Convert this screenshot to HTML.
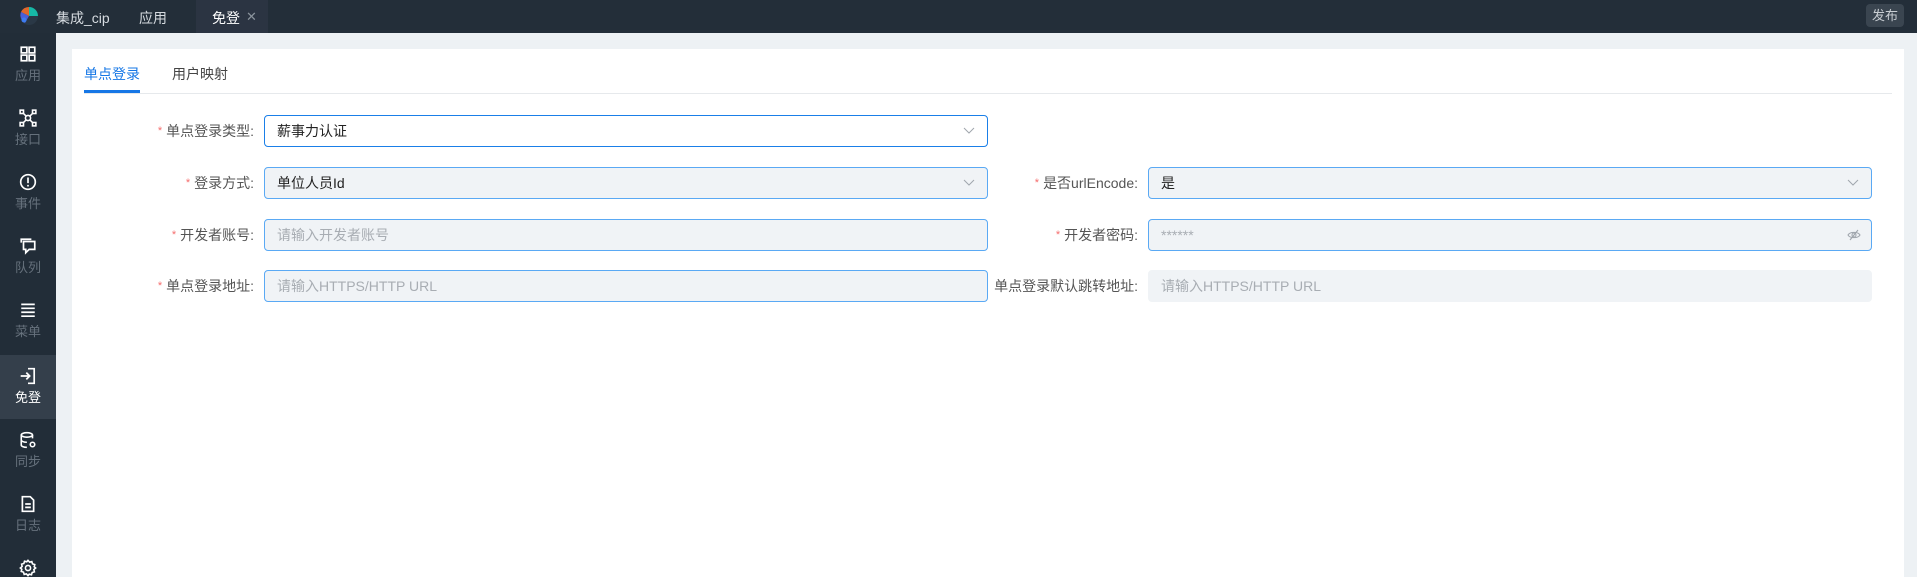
<!DOCTYPE html>
<html><head><meta charset="utf-8"><style>
*{box-sizing:border-box;margin:0;padding:0}
html{width:1917px;height:577px;overflow:hidden}
body{width:1917px;height:577px;overflow:hidden;background:#edf1f4;font-family:"Liberation Sans","Noto Sans CJK SC",sans-serif;font-size:14px;position:relative}
.top{position:absolute;left:0;top:0;width:1917px;height:33px;background:#232e39;color:#d6dbe0}
.top span{position:absolute;top:8px;font-size:14px}
.side{position:absolute;left:0;top:33px;width:56px;height:544px;background:#222d38;overflow:hidden}
.it{position:absolute;left:0;width:56px;height:64px;text-align:center;color:#66717c;font-size:13px}
.it svg{display:block;margin:12px auto 2px}
.it.act{background:#343f4b;color:#fff}
.card{position:absolute;left:72px;top:49px;width:1832px;height:528px;background:#fff}
.lab{position:absolute;text-align:right;color:#555;font-size:14px;line-height:32px;padding-right:4px}
.lab i{color:#f56c6c;font-style:normal;font-size:11px;margin-right:4px;vertical-align:2px}
.inp{position:absolute;height:32px;border:1px solid #5aa9f4;border-radius:4px;background:#f0f3f6;padding-left:12px;line-height:30px;color:#222;font-size:14px}
.ph{color:#a8adb3}
.arr{position:absolute;right:12px;top:11px}
</style></head><body>
<div class="top">
<svg style="position:absolute;left:19px;top:6px" width="20" height="20" viewBox="0 0 20 20"><circle cx="10" cy="10" r="9" fill="#2a3846"/><path d="M10 1a9 9 0 0 0-8 5l8 4z" fill="#e0672c"/><path d="M10 1a9 9 0 0 1 9 9l-9 0z" fill="#16b8a6"/><path d="M2 6a9 9 0 0 0 4 11l4-7z" fill="#4a5fd8"/><circle cx="5" cy="14" r="2.5" fill="#3d7cf0"/></svg>
<span style="left:56px">集成_cip</span>
<span style="left:139px">应用</span>
<div style="position:absolute;left:196px;top:0;width:72px;height:33px;background:#2b3442"></div>
<span style="left:212px;color:#fff">免登</span>
<span style="left:246px;color:#8a939c;font-size:13px;top:9px">✕</span>
<div style="position:absolute;left:1866px;top:4px;width:38px;height:23px;background:#3a4550;border-radius:4px;color:#c9ced3;font-size:13px;text-align:center;line-height:23px">发布</div>
</div>
<div class="side">
<div class="it" style="top:0"><svg width="18" height="18" viewBox="0 0 16 16" fill="none" stroke="#fff" stroke-width="1.5"><rect x="2" y="2" width="5" height="5"/><rect x="9" y="2" width="5" height="5"/><rect x="2" y="9" width="5" height="5"/><rect x="9" y="9" width="5" height="5"/></svg>应用</div>
<div class="it" style="top:64px"><svg width="18" height="18" viewBox="0 0 16 16" fill="none" stroke="#fff" stroke-width="1.4"><circle cx="8" cy="8" r="2.3"/><rect x="1" y="1" width="3" height="3"/><rect x="12" y="1" width="3" height="3"/><rect x="1" y="12" width="3" height="3"/><rect x="12" y="12" width="3" height="3"/><path d="M4 4l2.3 2.3M12 4L9.7 6.3M4 12l2.3-2.3M12 12L9.7 9.7"/></svg>接口</div>
<div class="it" style="top:128px"><svg width="18" height="18" viewBox="0 0 16 16" fill="none" stroke="#fff" stroke-width="1.5"><circle cx="8" cy="8" r="6.5"/><path d="M8 4v5M8 10.5v1.5"/></svg>事件</div>
<div class="it" style="top:192px"><svg width="18" height="18" viewBox="0 0 16 16" fill="none" stroke="#fff" stroke-width="1.5"><path d="M2 5V2h9"/><path d="M4 4h10v7H9l-3 3v-3H4z"/></svg>队列</div>
<div class="it" style="top:256px"><svg width="18" height="18" viewBox="0 0 16 16" stroke="#fff" stroke-width="1.5"><path d="M2 3h12M2 6.5h12M2 10h12M2 13.5h12"/></svg>菜单</div>
<div class="it act" style="top:322px"><svg width="18" height="18" viewBox="0 0 16 16" fill="none" stroke="#fff" stroke-width="1.5"><path d="M8 1.5h5.5v13H8"/><path d="M1.5 8h8M6.5 5l3 3-3 3"/></svg>免登</div>
<div class="it" style="top:386px"><svg width="18" height="18" viewBox="0 0 16 16" fill="none" stroke="#fff" stroke-width="1.4"><ellipse cx="7" cy="3.5" rx="5" ry="2"/><path d="M2 3.5v9c0 1 2 2 5 2M12 3.5v3M2 8c0 1 2 2 5 2"/><circle cx="12" cy="12" r="2"/></svg>同步</div>
<div class="it" style="top:450px"><svg width="18" height="18" viewBox="0 0 16 16" fill="none" stroke="#fff" stroke-width="1.5"><path d="M3 1.5h7l3 3v10H3z"/><path d="M5.5 8h5M5.5 11h5"/></svg>日志</div>
<div class="it" style="top:514px;height:30px"><svg width="18" height="18" viewBox="0 0 16 16" fill="none" stroke="#fff" stroke-width="1.4"><circle cx="8" cy="8" r="2.3"/><path d="M8 1.2l1.4 1.6 2-.5.6 2 2 .6-.5 2L14.8 8l-1.6 1.4.5 2-2 .6-.6 2-2-.5L8 14.8l-1.4-1.6-2 .5-.6-2-2-.6.5-2L1.2 8l1.6-1.4-.5-2 2-.6.6-2 2 .5z"/></svg></div>
</div>
<div class="card">
<div style="position:absolute;left:12px;top:15px;color:#1677e6;font-size:14px">单点登录</div>
<div style="position:absolute;left:12px;top:41px;width:56px;height:3px;background:#1677e6"></div>
<div style="position:absolute;left:100px;top:15px;color:#444;font-size:14px">用户映射</div>
<div style="position:absolute;left:12px;top:44px;width:1808px;height:1px;background:#e6e9ec"></div>
</div>
<div class="lab" style="left:100px;width:158px;top:115px"><i>*</i>单点登录类型:</div>
<div class="inp" style="left:264px;top:115px;width:724px;background:#fff;border-color:#1a7fe8">薪事力认证<svg class="arr" width="12" height="8" viewBox="0 0 12 8" fill="none" stroke="#a0a6ad"><path d="M1 1l5 5 5-5"/></svg></div>
<div class="lab" style="left:100px;width:158px;top:167px"><i>*</i>登录方式:</div>
<div class="inp" style="left:264px;top:167px;width:724px">单位人员Id<svg class="arr" width="12" height="8" viewBox="0 0 12 8" fill="none" stroke="#a0a6ad"><path d="M1 1l5 5 5-5"/></svg></div>
<div class="lab" style="left:900px;width:242px;top:167px"><i>*</i>是否urlEncode:</div>
<div class="inp" style="left:1148px;top:167px;width:724px">是<svg class="arr" width="12" height="8" viewBox="0 0 12 8" fill="none" stroke="#a0a6ad"><path d="M1 1l5 5 5-5"/></svg></div>
<div class="lab" style="left:100px;width:158px;top:219px"><i>*</i>开发者账号:</div>
<div class="inp ph" style="left:264px;top:219px;width:724px">请输入开发者账号</div>
<div class="lab" style="left:900px;width:242px;top:219px"><i>*</i>开发者密码:</div>
<div class="inp ph" style="left:1148px;top:219px;width:724px">******<svg style="position:absolute;right:10px;top:8px" width="14" height="14" viewBox="0 0 14 14" fill="none" stroke="#a0a6ad" stroke-width="1.1"><path d="M1 7c2-3.5 10-3.5 12 0-2 3.5-10 3.5-12 0z"/><circle cx="7" cy="7" r="2"/><path d="M11 2L3 12"/></svg></div>
<div class="lab" style="left:100px;width:158px;top:270px"><i>*</i>单点登录地址:</div>
<div class="inp ph" style="left:264px;top:270px;width:724px">请输入HTTPS/HTTP URL</div>
<div class="lab" style="left:900px;width:242px;top:270px">单点登录默认跳转地址:</div>
<div class="inp ph" style="left:1148px;top:270px;width:724px;border-color:#f0f3f6">请输入HTTPS/HTTP URL</div>
</body></html>
